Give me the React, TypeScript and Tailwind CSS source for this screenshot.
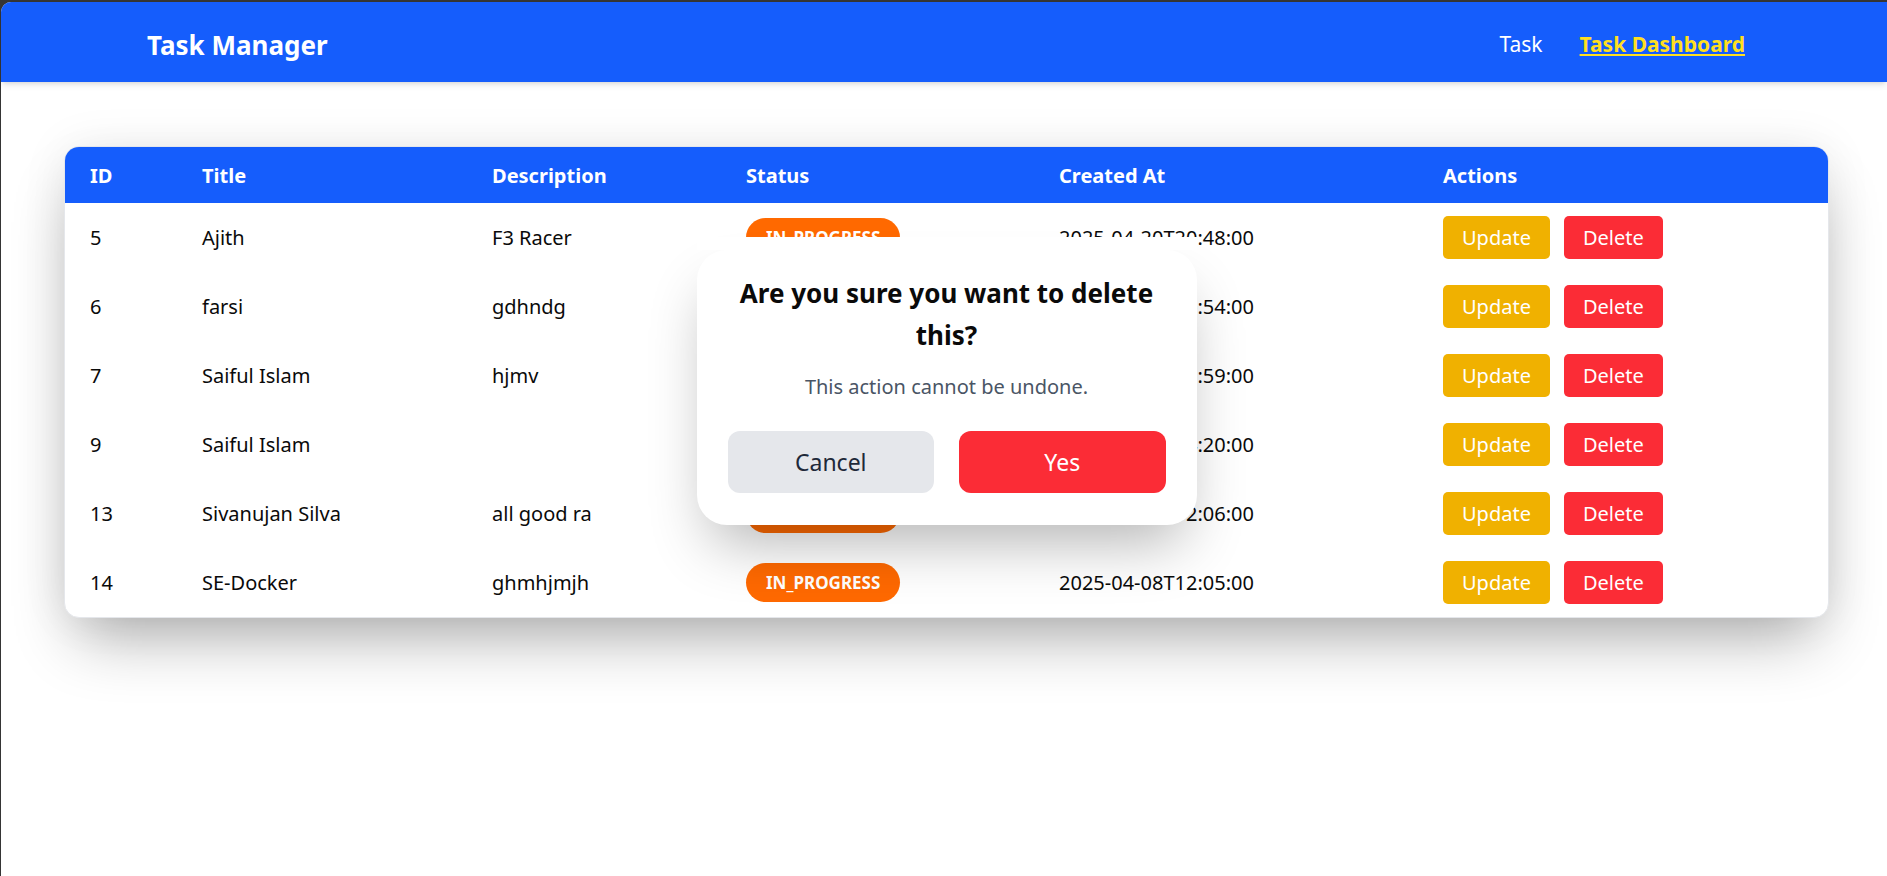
import React from 'react';

type Task = {
  id: number;
  title: string;
  description: string;
  status: string;
  createdAt: string;
};

const TASKS: Task[] = [
  { id: 5, title: 'Ajith', description: 'F3 Racer', status: 'IN_PROGRESS', createdAt: '2025-04-20T20:48:00' },
  { id: 6, title: 'farsi', description: 'gdhndg', status: 'IN_PROGRESS', createdAt: '2025-04-18T10:54:00' },
  { id: 7, title: 'Saiful Islam', description: 'hjmv', status: 'IN_PROGRESS', createdAt: '2025-04-16T13:59:00' },
  { id: 9, title: 'Saiful Islam', description: '', status: 'IN_PROGRESS', createdAt: '2025-04-12T14:20:00' },
  { id: 13, title: 'Sivanujan Silva', description: 'all good ra', status: 'IN_PROGRESS', createdAt: '2025-04-10T12:06:00' },
  { id: 14, title: 'SE-Docker', description: 'ghmhjmjh', status: 'IN_PROGRESS', createdAt: '2025-04-08T12:05:00' },
];

function Navbar() {
  return (
    <header className="flex h-[80px] items-center justify-between rounded-tl-[10px] bg-[#155dfc] pl-[146px] pr-[142px] pt-[6px] shadow-md">
      <h1 className="text-[26px] font-bold text-white">Task Manager</h1>
      <nav className="flex items-center gap-[37px] text-[21px]">
        <a href="#" className="text-white">
          Task
        </a>
        <a href="#" className="font-bold text-[#ffdf20] underline decoration-2 underline-offset-2">
          Task Dashboard
        </a>
      </nav>
    </header>
  );
}

function ConfirmDelete() {
  return (
    <div className="absolute inset-0 flex justify-center pt-[91px]">
      <div className="relative w-[500px]">
        {/* white band sitting over the first row, as in the captured frame */}
        <div className="relative z-10 h-[13px] bg-white" />
        <div className="rounded-[30px] bg-white px-[31px] pb-[32px] pt-[22px] text-center shadow-[0_30px_60px_-14px_rgba(0,0,0,0.3)]">
          <h2 className="text-[26px] font-bold leading-[42px] text-[#0a0a0a]">
            Are you sure you want to delete this?
          </h2>
          <p className="mt-4 text-[20px] leading-[30px] text-[#4a5565]">This action cannot be undone.</p>
          <div className="mt-[29px] flex gap-[25px]">
            <button type="button" className="h-[62px] flex-1 rounded-[12px] bg-[#e5e7eb] text-[23px] text-[#1e2939]">
              Cancel
            </button>
            <button type="button" className="h-[62px] flex-1 rounded-[12px] bg-[#fb2c36] text-[23px] text-white">
              Yes
            </button>
          </div>
        </div>
      </div>
    </div>
  );
}

function TaskTable() {
  return (
    <div className="overflow-hidden rounded-[15px] border border-gray-200 bg-white shadow-[0_32px_64px_-14px_rgba(0,0,0,0.32),0_0_48px_rgba(0,0,0,0.07)]">
      <table className="w-full table-fixed border-collapse text-left">
        <colgroup>
          <col className="w-[112px]" />
          <col className="w-[290px]" />
          <col className="w-[254px]" />
          <col className="w-[313px]" />
          <col className="w-[384px]" />
          <col />
        </colgroup>
        <thead className="bg-[#155dfc] text-white">
          <tr className="h-[56px]">
            <th className="pl-[25px] pt-[2px] text-[20px] font-bold">ID</th>
            <th className="pl-[25px] pt-[2px] text-[20px] font-bold">Title</th>
            <th className="pl-[25px] pt-[2px] text-[20px] font-bold">Description</th>
            <th className="pl-[25px] pt-[2px] text-[20px] font-bold">Status</th>
            <th className="pl-[25px] pt-[2px] text-[20px] font-bold">Created At</th>
            <th className="pl-[25px] pt-[2px] text-[20px] font-bold">Actions</th>
          </tr>
        </thead>
        <tbody className="text-[20px] text-[#0a0a0a]">
          {TASKS.map((t) => (
            <tr key={t.id} className="h-[69px]">
              <td className="pl-[25px]">{t.id}</td>
              <td className="pl-[25px]">{t.title}</td>
              <td className="pl-[25px]">{t.description}</td>
              <td className="pl-[25px]">
                <span className="inline-flex h-[39px] items-center rounded-full bg-[#ff6900] px-[20px] text-[17px] font-bold text-white">
                  {t.status}
                </span>
              </td>
              <td className="pl-[25px]">{t.createdAt}</td>
              <td className="pl-[25px]">
                <div className="flex gap-[14px]">
                  <button type="button" className="h-[43px] rounded-[5px] bg-[#f0b100] px-[19px] text-[20px] text-white">
                    Update
                  </button>
                  <button type="button" className="h-[43px] rounded-[5px] bg-[#fb2c36] px-[19px] text-[20px] text-white">
                    Delete
                  </button>
                </div>
              </td>
            </tr>
          ))}
        </tbody>
      </table>
    </div>
  );
}

export default function App() {
  return (
    <div className="h-screen overflow-hidden bg-[#353535] pl-px pt-[2px]">
      <div className="h-full rounded-tl-[10px] bg-white font-['Noto_Sans',sans-serif]">
        <Navbar />
        <main className="pl-[63px] pr-[58px] pt-[64px]">
          <div className="relative">
            <TaskTable />
            <ConfirmDelete />
          </div>
        </main>
      </div>
    </div>
  );
}
